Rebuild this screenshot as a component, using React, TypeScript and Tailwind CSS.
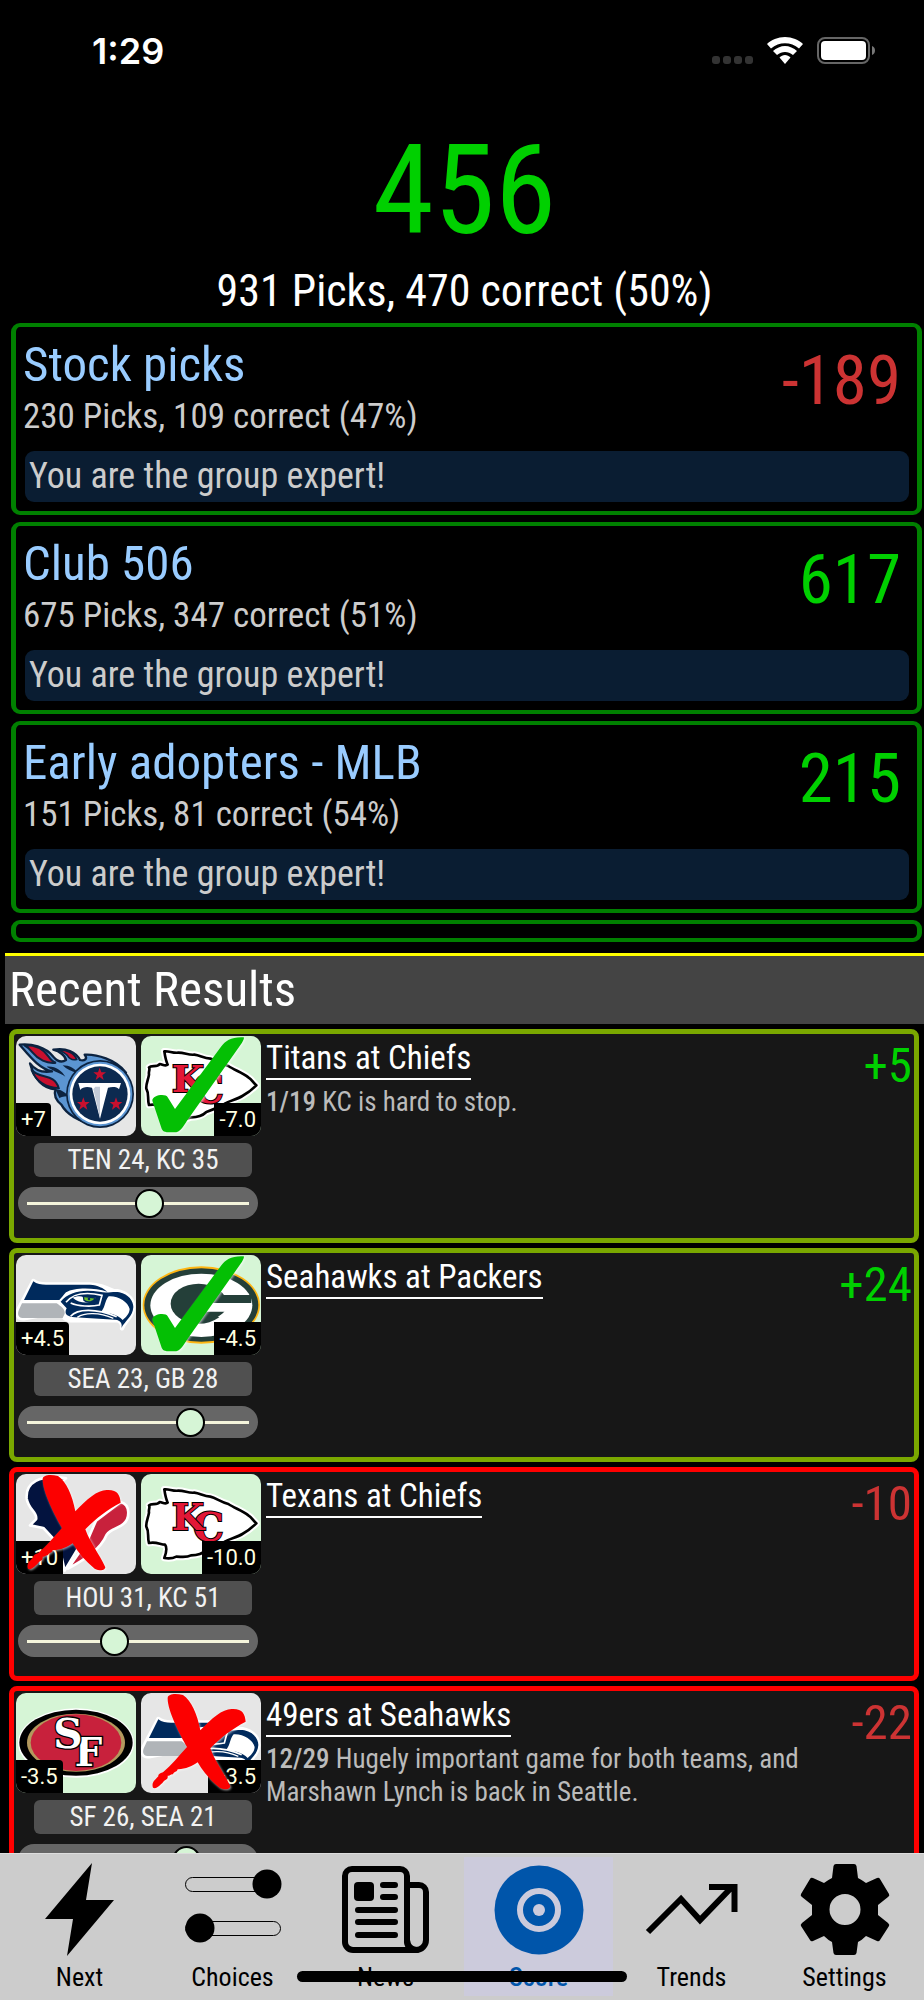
import React from "react";

type TeamId = "titans" | "chiefs" | "seahawks" | "packers" | "texans" | "niners";
type Mark = "check" | "cross";

interface Side {
  team: TeamId;
  line: string;
  picked?: boolean;
  mark?: Mark;
}

interface Result {
  title: string;
  date?: string;
  note?: string;
  score: string;
  points: number;
  confidence: number;
  away: Side;
  home: Side;
}

const groups = [
  { name: "Stock picks", summary: "230 Picks, 109 correct (47%)", points: -189 },
  { name: "Club 506", summary: "675 Picks, 347 correct (51%)", points: 617 },
  { name: "Early adopters - MLB", summary: "151 Picks, 81 correct (54%)", points: 215 },
];

const results: Result[] = [
  {
    title: "Titans at Chiefs",
    date: "1/19",
    note: "KC is hard to stop.",
    score: "TEN 24, KC 35",
    points: 5,
    confidence: 56,
    away: { team: "titans", line: "+7" },
    home: { team: "chiefs", line: "-7.0", picked: true, mark: "check" },
  },
  {
    title: "Seahawks at Packers",
    score: "SEA 23, GB 28",
    points: 24,
    confidence: 77,
    away: { team: "seahawks", line: "+4.5" },
    home: { team: "packers", line: "-4.5", picked: true, mark: "check" },
  },
  {
    title: "Texans at Chiefs",
    score: "HOU 31, KC 51",
    points: -10,
    confidence: 38,
    away: { team: "texans", line: "+10", mark: "cross" },
    home: { team: "chiefs", line: "-10.0", picked: true },
  },
  {
    title: "49ers at Seahawks",
    date: "12/29",
    note: "Hugely important game for both teams, and Marshawn Lynch is back in Seattle.",
    score: "SF 26, SEA 21",
    points: -22,
    confidence: 75,
    away: { team: "niners", line: "-3.5", picked: true },
    home: { team: "seahawks", line: "+3.5", mark: "cross" },
  },
];

function Star({ x, y }: { x: number; y: number }) {
  return (
    <path
      transform={`translate(${x} ${y})`}
      d="M0-20 5-6 19-6 8 3 12 17 0 8-12 17-8 3-19-6-5-6Z"
      fill="#c8102e"
    />
  );
}

function Titans() {
  return (
    <g>
      <path
        d="M11 26C45 22 88 32 112 62C124 76 138 80 150 72C148 58 130 46 112 41C150 34 180 48 192 72C206 76 216 68 206 56C240 54 300 70 330 110L240 262C190 262 150 232 136 206C124 196 112 180 118 160C96 158 60 146 42 82C58 104 84 110 108 106C70 98 44 64 11 26Z"
        fill="#5b95d2"
        stroke="#0c2340"
        strokeWidth="7"
        strokeLinejoin="round"
      />
      <path d="M24 27C56 26 82 38 98 62C106 74 112 78 120 80C92 84 66 70 50 50C42 40 34 32 24 27Z" fill="#c8102e" stroke="#0c2340" strokeWidth="6" />
      <path d="M126 42C152 40 176 52 182 70C168 74 160 68 154 58C146 50 136 46 126 42Z" fill="#c8102e" stroke="#0c2340" strokeWidth="5" />
      <path d="M46 100C62 122 92 118 110 130C122 138 126 148 128 156C92 156 60 138 46 100Z" fill="#c8102e" stroke="#0c2340" strokeWidth="6" />
      <path d="M92 92C120 90 136 104 148 122C136 112 116 108 92 92Z" fill="#0c2340" />
      <path d="M140 88C160 88 178 98 186 112C166 106 152 100 140 88Z" fill="#0c2340" />
      <path d="M118 160C136 158 146 172 162 180C150 182 140 180 130 186Z" fill="#0c2340" />
      <circle cx="252" cy="174" r="102" fill="#0c2340" />
      <circle cx="252" cy="174" r="97" fill="#5b95d2" />
      <circle cx="252" cy="174" r="91" fill="#fff" />
      <circle cx="252" cy="174" r="83" fill="#0c2a50" />
      <Star x={251} y={115} />
      <Star x={202} y={204} />
      <Star x={300} y={204} />
      <path d="M187 141H315L309 160C304 152 288 152 276 155L252 248L228 155C214 152 200 152 193 162Z" fill="#fff" />
      <path d="M238 152H252V246L232 160Z" fill="#c3cbd8" />
    </g>
  );
}

const arrowHead =
  "M70 46C84 44 94 52 112 50C132 50 142 58 160 56C178 58 188 68 208 68C226 72 238 84 262 90C280 102 304 110 322 124C332 130 338 142 346 148C334 160 322 170 304 180C288 190 266 194 250 204C232 214 214 222 196 228C184 240 166 244 150 244C136 252 122 248 106 248C94 254 82 254 70 252C76 236 80 222 72 212C58 212 46 202 24 207C18 188 26 176 16 158C14 146 22 130 24 116C22 106 28 100 24 94C32 86 48 96 56 84C66 86 74 92 80 86C74 72 72 60 70 46Z";

function Chiefs() {
  return (
    <g>
      <path d={arrowHead} fill="#fff" stroke="#fff" strokeWidth="20" strokeLinejoin="round" />
      <path d={arrowHead} fill="#fff" stroke="#000" strokeWidth="8" strokeLinejoin="round" />
      <g fontFamily="'DejaVu Serif', serif" fontWeight="700" fill="#e31837" stroke="#000" strokeWidth="6" paintOrder="stroke">
        <text x="156" y="202" fontSize="116">C</text>
        <text x="92" y="168" fontSize="112">K</text>
      </g>
    </g>
  );
}

function Packers() {
  return (
    <g>
      <ellipse cx="181" cy="150" rx="176" ry="116" fill="#ffb612" />
      <ellipse cx="181" cy="150" rx="171" ry="110" fill="#243f39" />
      <ellipse cx="181" cy="151" rx="153" ry="95" fill="#fff" />
      <ellipse cx="173" cy="146" rx="84" ry="60" fill="#243f39" />
      <path d="M225 120H331V144H225Z" fill="#243f39" />
      <path d="M194 144H331L322 186L230 186L252 170H194Z" fill="#fff" />
    </g>
  );
}

function Seahawks() {
  const head =
    "M52 78C62 86 76 88 90 88L222 88C252 90 272 98 292 108C324 108 352 128 352 156C350 188 326 196 318 220C320 204 314 196 298 195L180 196C150 198 134 186 142 168L24 190C4 192 2 176 8 162Z";
  return (
    <g>
      <path d={head} fill="#fff" stroke="#fff" strokeWidth="13" strokeLinejoin="round" />
      <path d="M52 79C62 87 76 89 90 89L222 89C246 91 262 99 274 110C236 98 176 96 150 112C142 120 138 128 130 135L24 135Z" fill="#002a5c" />
      <path d="M18 145H122C134 154 148 162 146 176L140 189H20C4 188 4 174 10 162Z" fill="#b0b4b8" />
      <path
        d="M134 140C158 110 200 102 250 110C272 116 294 108 310 112C338 118 352 138 352 156C350 186 328 196 316 219C320 206 314 196 298 194L176 187C156 186 142 178 152 160Z"
        fill="#002a5c"
      />
      <path d="M278 124C306 122 336 140 341 162C340 178 328 188 320 195C304 176 280 176 256 170C268 156 266 138 278 124Z" fill="#fff" />
      <path d="M164 184C184 160 240 160 302 185" fill="none" stroke="#fff" strokeWidth="5" />
      <path d="M184 187C206 172 250 172 292 190" fill="none" stroke="#fff" strokeWidth="4" />
      <path d="M150 142C174 112 218 112 258 121L250 150C226 156 186 154 164 144" fill="none" stroke="#fff" strokeWidth="5" />
      <path d="M172 126C198 116 222 120 250 128L242 144C214 148 190 142 172 126Z" fill="#002a5c" />
      <path d="M170 128C190 120 202 124 210 130L240 128C230 144 196 150 170 128Z" fill="#fff" />
      <path d="M202 124L238 129C234 141 214 145 204 136Z" fill="#69be28" stroke="#002a5c" strokeWidth="4" />
      <circle cx="219" cy="132" r="4" fill="#002a5c" />
    </g>
  );
}

function Texans() {
  return (
    <g stroke="#fff" strokeWidth="8" strokeLinejoin="round">
      <path d="M150 13C70 0 28 26 32 74C38 108 66 116 60 136L42 154L82 162L114 196L136 246L146 290L200 200L180 130L130 30Z" fill="#03133f" />
      <path d="M314 84C344 92 342 134 322 150C304 166 286 162 272 182C254 226 206 256 156 284L214 200L240 140Z" fill="#c8213c" />
    </g>
  );
}

function Niners() {
  return (
    <g>
      <ellipse cx="180" cy="150" rx="174" ry="104" fill="#fff" />
      <ellipse cx="180" cy="149" rx="170" ry="99" fill="#000" />
      <ellipse cx="180" cy="149" rx="147" ry="87" fill="#b3995d" />
      <ellipse cx="180" cy="149" rx="136" ry="85" fill="#c8213c" />
      <g fontFamily="'DejaVu Serif', serif" fontWeight="700" fill="#fff" stroke="#000" strokeWidth="8" paintOrder="stroke">
        <text x="176" y="218" fontSize="116">F</text>
        <text x="112" y="166" fontSize="122">S</text>
      </g>
    </g>
  );
}

const logos: Record<TeamId, () => React.JSX.Element> = {
  titans: Titans,
  chiefs: Chiefs,
  seahawks: Seahawks,
  packers: Packers,
  texans: Texans,
  niners: Niners,
};

function ResultMark({ mark }: { mark: Mark }) {
  return (
    <svg viewBox="0 0 360 300" className="absolute inset-0 h-full w-full drop-shadow-[1px_1px_1px_rgba(255,255,255,0.6)]" aria-hidden="true">
      {mark === "check" ? (
        <path
          d="M308 4C272 2 254 14 240 32L102 219L80 184C76 172 34 176 34 194L62 278C66 288 74 289 98 289C118 290 126 272 138 254L302 22C308 12 310 6 308 4Z"
          fill="#04bf04"
        />
      ) : (
        <path
          d="M80 14C82 2 104 0 126 6C152 24 168 62 178 112C212 76 244 48 272 48C304 46 312 62 314 86C276 106 240 132 208 166C222 206 250 240 268 280C266 292 250 290 236 284C208 262 186 236 170 208C156 218 130 230 110 229C108 238 98 236 96 244C88 242 88 250 80 248C82 262 70 258 66 268C58 276 46 290 36 284C30 268 44 260 52 250C50 244 60 240 66 238C92 216 114 188 138 162C116 124 78 50 80 14Z"
          fill="#fc0000"
        />
      )}
    </svg>
  );
}

function TeamTile({ side, align }: { side: Side; align: "left" | "right" }) {
  const Logo = logos[side.team];
  return (
    <div className={`relative h-[100px] w-[120px] overflow-hidden rounded-[10px] ${side.picked ? "bg-[#d6f5d6]" : "bg-[#e6e6e6]"}`}>
      <svg viewBox="0 0 360 300" className="h-full w-full" aria-label={side.team} role="img">
        <Logo />
      </svg>
      <span
        className={`absolute bottom-0 bg-black px-[5px] font-[Roboto,sans-serif] text-[22px] leading-[33px] text-[#ffffe0] ${
          align === "left" ? "left-0 rounded-tr" : "right-0"
        }`}
      >
        {side.line}
      </span>
      {side.mark && <ResultMark mark={side.mark} />}
    </div>
  );
}

function signed(n: number) {
  return n > 0 ? `+${n}` : `${n}`;
}

function ResultCard({ result }: { result: Result }) {
  const won = result.points > 0;
  return (
    <article className={`flex h-[214px] gap-[5px] rounded-lg border-5 bg-[#171717] p-0.5 ${won ? "border-[#7aa800]" : "border-[#ff0000]"}`}>
      <div className="w-[245px] shrink-0">
        <div className="flex gap-[5px]">
          <TeamTile side={result.away} align="left" />
          <TeamTile side={result.home} align="right" />
        </div>
        <p className="mt-[7px] ml-[18px] w-[218px] rounded-md bg-[#505050] text-center text-[27px] leading-[34px] text-[#f2f2f2]">{result.score}</p>
        <div className="mt-2.5 ml-0.5 flex h-8 w-[240px] items-center rounded-full bg-[#666] px-[9px]">
          <input
            type="range"
            aria-label={`Confidence for ${result.title}`}
            defaultValue={result.confidence}
            className="h-7 w-full appearance-none bg-transparent [&::-webkit-slider-runnable-track]:h-[3px] [&::-webkit-slider-runnable-track]:bg-[#f5f5dc] [&::-webkit-slider-thumb]:-mt-[13px] [&::-webkit-slider-thumb]:size-[29px] [&::-webkit-slider-thumb]:appearance-none [&::-webkit-slider-thumb]:rounded-full [&::-webkit-slider-thumb]:border-2 [&::-webkit-slider-thumb]:border-solid [&::-webkit-slider-thumb]:border-black [&::-webkit-slider-thumb]:bg-[#d6f5d6]"
          />
        </div>
      </div>
      <div className="min-w-0 flex-1 pt-0.5">
        <h3 className="flex">
          <a href="#game" className="border-b-2 border-white text-[33px] leading-[40px] text-white">
            {result.title}
          </a>
        </h3>
        {result.note && (
          <p className="mt-1.5 text-[27px] leading-[33px] text-[#bbb]">
            <span className="font-medium">{result.date}</span> {result.note}
          </p>
        )}
      </div>
      <p className={`shrink-0 pt-[5px] text-[49px] leading-[50px] ${won ? "text-[#00d000]" : "text-[#cc3333]"}`}>{signed(result.points)}</p>
    </article>
  );
}

function GroupCard({ group }: { group: (typeof groups)[number] }) {
  return (
    <article className="rounded-[9px] border-x-5 border-y-4 border-[#008000] py-[9px] pr-2 pl-[7px]">
      <div className="flex justify-between">
        <div>
          <h2 className="text-[49px] leading-[58px] text-[#99ccff]">
            <a href="#group">{group.name}</a>
          </h2>
          <p className="text-[35px] leading-[45px] text-[#ccc]">{group.summary}</p>
        </div>
        <p className={`mt-[11px] pr-2 text-[69px] leading-[68px] ${group.points > 0 ? "text-[#00d000]" : "text-[#cc3333]"}`}>
          {group.points}
        </p>
      </div>
      <p className="mt-3 ml-0.5 rounded-[9px] bg-[#0a1d32] px-1 text-[36px] leading-[51px] text-[#ccc]">You are the group expert!</p>
    </article>
  );
}

function StatusBar() {
  return (
    <header className="flex h-[127px] items-start justify-between pt-[30px] pr-12 pl-[92px] text-white">
      <time className="font-[Inter,sans-serif] text-[36px] leading-[42px] font-semibold">1:29</time>
      <svg width="164" height="28" viewBox="0 0 164 28" className="mt-[7px]" aria-hidden="true">
        <g fill="#333">
          <rect x="0" y="19" width="8" height="8" rx="3" />
          <rect x="11" y="19" width="8" height="8" rx="3" />
          <rect x="22" y="19" width="8" height="8" rx="3" />
          <rect x="33" y="19" width="8" height="8" rx="3" />
        </g>
        <g fill="#fff">
          <path d="M73 0C66 0 59 3 55 7L59 11.500C67 4.500 79 4.500 87 11.500L91 7C87 3 80 0 73 0Z" />
          <path d="M73 9C69 9 64 11 61 14L65 18C70 14 76 14 81 18L85 14C82 11 77 9 73 9Z" />
          <path d="M73 18C71 18 69 19 67.500 20.500L73 27L78.500 20.500C77 19 75 18 73 18Z" />
        </g>
        <rect x="106" y="1" width="51" height="25" rx="7" fill="none" stroke="#666" strokeWidth="2" />
        <rect x="109" y="4" width="45" height="19" rx="4" fill="#fff" />
        <path d="M160 9C164 10 164 17 160 18Z" fill="#777" />
      </svg>
    </header>
  );
}

const tabs = [
  {
    label: "Next",
    icon: <path d="M90 23 84 60H112L65 116L71 79H43Z" />,
  },
  {
    label: "Choices",
    icon: (
      <>
        <g fill="none" stroke="#000">
          <rect x="30.500" y="37.500" width="95" height="14" rx="7" />
          <rect x="30.500" y="81.500" width="95" height="14" rx="7" />
        </g>
        <circle cx="112" cy="44" r="14.500" />
        <circle cx="45" cy="88" r="14.500" />
      </>
    ),
  },
  {
    label: "News",
    icon: (
      <>
        <g fill="none" stroke="#000" strokeWidth="6" strokeLinejoin="round">
          <path d="M102 110H45A8 8 0 0 1 37 102V36A7 7 0 0 1 44 29H92A7 7 0 0 1 99 36V100A9 9 0 0 0 108 110A10 10 0 0 0 118 100V52A7 7 0 0 0 111 45H99" />
          <path d="M99 100Q100 110 109 110H97" />
        </g>
        <rect x="46" y="42" width="20" height="19" rx="4" />
        <g stroke="#000" strokeWidth="6" strokeLinecap="round">
          <path d="M75 45H87M75 57H87M50 70H87M50 82H87M50 95H87" />
        </g>
      </>
    ),
  },
  {
    label: "Score",
    icon: (
      <>
        <circle cx="78" cy="70" r="44.500" />
        <circle cx="78" cy="70" r="19" fill="none" stroke="#cccbdc" strokeWidth="6" />
        <circle cx="78" cy="70" r="6" fill="#cccbdc" />
      </>
    ),
  },
  {
    label: "Trends",
    icon: <path d="M34 92L67 59L86 80L117 48M95 47H120.500V72" fill="none" stroke="#000" strokeWidth="6" />,
  },
  {
    label: "Settings",
    icon: (
      <path
        fillRule="evenodd"
        d="M69 24H87Q89 24 89.500 26L91 38Q95 40 99 43L110 38Q112 37 113 39L122 54Q123 56 121 57L111 65V75L121 83Q123 85 122 86L113 100Q112 102 110 101L99 96Q95 100 91 102L89.500 113Q89 115 87 115H69Q67 115 66.500 113L65 102Q61 100 57 96L46 101Q44 102 43 100L34 86Q33 85 35 83L45 75V65L35 57Q33 56 34 54L43 39Q44 37 46 38L57 43Q61 40 65 38L66.500 26Q67 24 69 24ZM78 54A15.500 15.500 0 1 0 78 85A15.500 15.500 0 1 0 78 54Z"
      />
    ),
  },
];

function TabBar() {
  return (
    <nav className="fixed inset-x-0 bottom-0 border-t border-[#ddd] bg-[#ccc] px-[3px] pt-[3px] pb-1">
      <div className="grid grid-cols-6">
        {tabs.map((tab) => {
          const active = tab.label === "Score";
          return (
            <button
              key={tab.label}
              type="button"
              aria-current={active ? "page" : undefined}
              className={`mx-0.5 flex flex-col items-center pb-[3px] ${active ? "bg-[#cccbdc] text-[#0055aa]" : "text-black"}`}
            >
              <svg viewBox="23 17 110 104" className="h-[104px] w-[110px]" fill="currentColor" aria-hidden="true">
                {tab.icon}
              </svg>
              <span className={`text-[26px] leading-[32px] ${active ? "font-medium" : ""}`}>{tab.label}</span>
            </button>
          );
        })}
      </div>
      <div className="absolute bottom-[18px] left-1/2 h-[11px] w-[330px] -translate-x-1/2 rounded-full bg-black" />
    </nav>
  );
}

export default function App() {
  return (
    <div className="min-h-screen overflow-hidden bg-black pb-[100px] font-['Roboto_Condensed',Roboto,sans-serif] text-white">
      <StatusBar />
      <main className="pl-[5px]">
        <section className="text-center">
          <h1 className="text-[124px] leading-[128px] text-[#00d000]">456</h1>
          <p className="mt-1.5 text-[44px] leading-[60px]">931 Picks, 470 correct (50%)</p>
        </section>
        <section className="mt-0.5 flex flex-col gap-[7px] pr-0.5 pl-1.5">
          {groups.map((group) => (
            <GroupCard key={group.name} group={group} />
          ))}
          <div className="h-[22px] rounded-[9px] border-x-5 border-y-4 border-[#008000]" />
        </section>
        <section className="mt-[11px]">
          <h2 className="border-t-[3px] border-[#ffff00] bg-[#444] pl-1 text-[49px] leading-[68px]">Recent Results</h2>
          <div className="mt-[5px] flex flex-col gap-[5px] pr-[5px] pl-1">
            {results.map((result) => (
              <ResultCard key={result.title} result={result} />
            ))}
          </div>
        </section>
      </main>
      <TabBar />
    </div>
  );
}
